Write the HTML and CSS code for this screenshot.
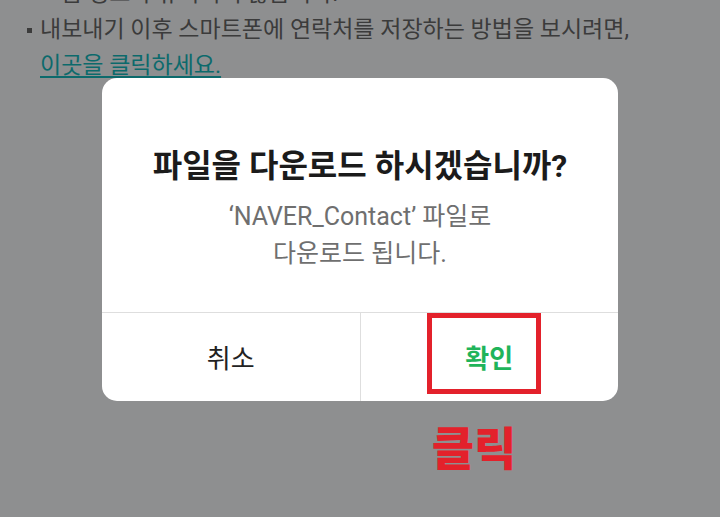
FILE: index.html
```html
<html>
	<head>
		<meta charset="utf-8">
		<title>연락처 내보내기</title>
		<link rel="stylesheet" href="styles.css">
	</head>
	<body>
		<div id="page">
			<div id="notice">
				<p class="line cut">그룹 정보가 유지되지 않습니다.</p>
				<p class="line"><span class="dot"></span>내보내기 이후 스마트폰에 연락처를 저장하는 방법을 보시려면,</p>
				<p class="line last"><a href="#">이곳을 클릭하세요.</a></p>
			</div>
			<div id="dialog">
				<div class="body">
					<h1>파일을 다운로드 하시겠습니까?</h1>
					<p class="desc">‘NAVER_Contact’ 파일로<br>다운로드 됩니다.</p>
				</div>
				<div class="btns">
					<div class="btn cancel">취소</div>
					<div class="btn ok">확인<span class="mark"></span></div>
				</div>
			</div>
			<div id="click">클릭</div>
		</div>
	</body>
</html>
```

FILE: styles.css
```css
html, body {margin:0;padding:0;}
body {
	font-family:"Roboto", "Noto Sans CJK KR", sans-serif;
	background:#8e8f90;
	width:720px;
	height:517px;
	overflow:hidden;
}
#page {
	position:relative;
}
#notice {
	margin-top:-24px;
	padding-left:40px;
	color:#3b3b3b;
	font-size:23px;
}
.line {
	margin:0;
	height:36px;
	line-height:36px;
	position:relative;
	white-space:nowrap;
}
.line.last {
	height:30px;
}
.dot {
	position:absolute;
	left:-13px;
	top:16px;
	width:5px;
	height:5px;
	background:#3b3b3b;
}
#notice a {
	color:#0c6a6c;
	text-decoration:underline;
	text-underline-offset:3px;
}
#dialog {
	width:516px;
	margin:0 auto;
	background:#fff;
	border-radius:15px;
	overflow:hidden;
}
#dialog .body {
	height:234px;
	padding-top:66px;
	box-sizing:border-box;
	text-align:center;
}
h1 {
	margin:0;
	font-size:32px;
	font-weight:700;
	color:#1b1b1b;
	line-height:44px;
}
.desc {
	margin:10px 0 0;
	font-size:25px;
	line-height:37px;
	color:#6f6f6f;
}
.btns {
	display:flex;
	height:88px;
	border-top:1px solid #dedede;
}
.btn {
	flex:1;
	display:flex;
	align-items:center;
	justify-content:center;
	font-size:26px;
	padding-bottom:2px;
}
.cancel {
	color:#222;
	border-right:1px solid #dedede;
}
.ok {
	color:#1fb45a;
	font-weight:700;
	position:relative;
}
.mark {
	position:absolute;
	left:66px;
	top:0;
	width:104px;
	height:71px;
	border:5px solid #e3212b;
}
#click {
	width:120px;
	margin:16px 0 0 414px;
	text-align:center;
	color:#e3212b;
	font-family:"Noto Sans CJK KR", sans-serif;
	font-size:46px;
	font-weight:900;
	line-height:56px;
}
```
